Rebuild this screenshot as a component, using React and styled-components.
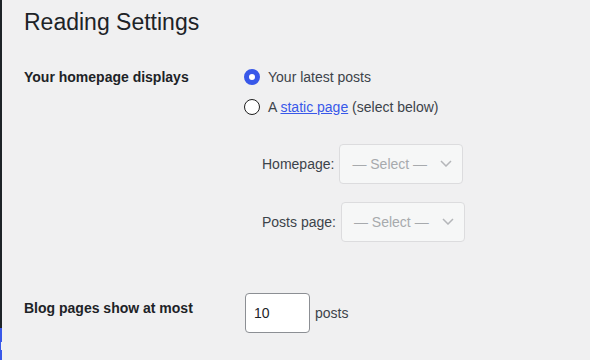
import React from "react";
import styled, { createGlobalStyle } from "styled-components";

const GlobalStyle = createGlobalStyle`
  body {
    margin: 0;
    background: #f0f0f1;
    font-family: "Liberation Sans", Arial, sans-serif;
    color: #1d2327;
  }
`;

export const Page = styled.div`
  display: flex;
  height: 360px;
  overflow: hidden;
`;

export const Sidebar = styled.div`
  display: flex;
  flex-direction: column;
  width: 2px;
  flex-shrink: 0;
  background: #1d2327;
`;

export const SidebarFill = styled.div`
  flex: 1;
`;

export const CurrentItem = styled.div`
  position: relative;
  height: 32px;
  background: #3858e9;
  &::after {
    content: "";
    position: absolute;
    right: 0;
    top: 14px;
    width: 1px;
    height: 8px;
    background: #f0f0f1;
  }
`;

export const Main = styled.div`
  flex: 1;
  padding-left: 22px;
`;

export const Title = styled.h1`
  margin: 8px 0 0 0;
  font-size: 23px;
  font-weight: 400;
  line-height: 1.3;
  color: #1d2327;
`;

export const Row = styled.div`
  display: grid;
  grid-template-columns: 220px 1fr;
  margin-top: ${(p) => p.$gap}px;
`;

export const Label = styled.div`
  font-size: 14px;
  font-weight: 700;
  line-height: 18px;
  padding-top: ${(p) => p.$offset || 0}px;
`;

export const Options = styled.div`
  display: flex;
  flex-direction: column;
  gap: 12px;
`;

export const Option = styled.label`
  display: flex;
  align-items: center;
  gap: 8px;
  font-size: 14px;
  line-height: 18px;
  color: #3c434a;
`;

export const Radio = styled.span`
  box-sizing: border-box;
  width: 16px;
  height: 16px;
  border-radius: 50%;
  background: #fff;
  border: ${(p) => (p.$checked ? "5px solid #3858e9" : "1px solid #1e1e1e")};
`;

export const Link = styled.a`
  color: #3858e9;
  text-decoration: underline;
`;

export const Pickers = styled.div`
  display: flex;
  flex-direction: column;
  gap: 18px;
  padding: 28px 0 0 18px;
`;

export const PickerRow = styled.div`
  display: flex;
  align-items: center;
  gap: 5px;
  font-size: 14px;
  line-height: 18px;
  color: #3c434a;
`;

export const FakeSelect = styled.div`
  display: flex;
  align-items: center;
  gap: 13px;
  height: 40px;
  box-sizing: border-box;
  padding: 0 10px 0 12px;
  background: #f6f7f7;
  border: 1px solid #dcdcde;
  border-radius: 4px;
  color: #a7aaad;
  font-size: 14px;
`;

export const InputRow = styled.div`
  display: flex;
  align-items: center;
  gap: 5px;
  padding-left: 1px;
  font-size: 14px;
  color: #3c434a;
`;

export const NumberInput = styled.input`
  box-sizing: border-box;
  width: 65px;
  height: 40px;
  padding: 0 8px;
  border: 1px solid #8c8f94;
  border-radius: 4px;
  background: #fff;
  font-family: "Liberation Sans", Arial, sans-serif;
  font-size: 14px;
  color: #1d2327;
  outline: none;
`;

const Chevron = () => (
  <svg width="12" height="7" viewBox="0 0 12 7" fill="none">
    <path d="M1 1l5 5 5-5" stroke="#b4b6b9" strokeWidth="1.5" />
  </svg>
);

const Picker = ({ label }) => (
  <PickerRow>
    <span>{label}</span>
    <FakeSelect>
      <span>— Select —</span>
      <Chevron />
    </FakeSelect>
  </PickerRow>
);

export default function App() {
  return (
    <>
      <GlobalStyle />
      <Page>
        <Sidebar>
          <SidebarFill />
          <CurrentItem />
        </Sidebar>
        <Main>
          <Title>Reading Settings</Title>
          <Row $gap={30}>
            <Label>Your homepage displays</Label>
            <div>
              <Options>
                <Option>
                  <Radio $checked />
                  Your latest posts
                </Option>
                <Option>
                  <Radio />
                  <span>
                    A <Link href="#">static page</Link> (select below)
                  </span>
                </Option>
              </Options>
              <Pickers>
                <Picker label="Homepage:" />
                <Picker label="Posts page:" />
              </Pickers>
            </div>
          </Row>
          <Row $gap={51}>
            <Label $offset={6}>Blog pages show at most</Label>
            <InputRow>
              <NumberInput type="text" defaultValue="10" readOnly />
              <span>posts</span>
            </InputRow>
          </Row>
        </Main>
      </Page>
    </>
  );
}
